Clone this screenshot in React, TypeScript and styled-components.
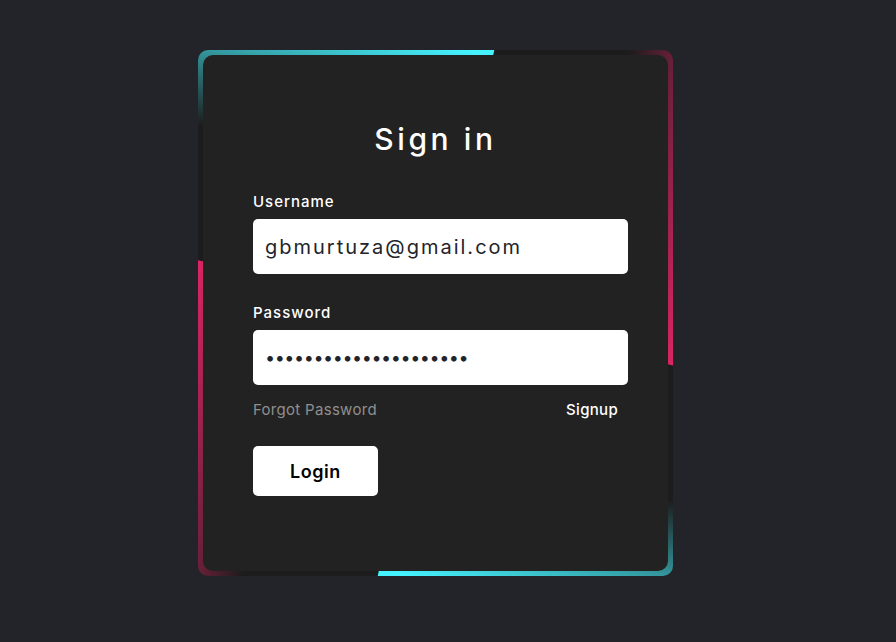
import React from "react";
import styled, { createGlobalStyle } from "styled-components";

const GlobalStyle = createGlobalStyle`
  * { box-sizing: border-box; }
  html, body { margin: 0; padding: 0; }
  body {
    background: #23242a;
    font-family: Inter, "Open Sans", sans-serif;
  }
`;

const Page = styled.main`
  min-height: 642px;
  display: flex;
  justify-content: center;
  align-items: flex-start;
  padding: 50px 25px 0 0;
`;

const Box = styled.div`
  position: relative;
  width: 475px;
  height: 526px;
  padding: 5px;
  display: flex;
  background: #1c1c1c;
  border-radius: 10px;
  overflow: hidden;
`;

const Glow = styled.span<{ $color: string; $angle: number }>`
  position: absolute;
  top: -50%;
  left: -50%;
  width: 100%;
  height: 100%;
  transform-origin: bottom right;
  transform: rotate(${(p) => p.$angle}deg);
  background: linear-gradient(
    0deg,
    transparent,
    transparent,
    ${(p) => p.$color},
    ${(p) => p.$color},
    ${(p) => p.$color}
  );
  pointer-events: none;
`;

const Form = styled.form`
  position: relative;
  z-index: 2;
  flex: 1;
  min-width: 0;
  display: flex;
  flex-direction: column;
  align-items: flex-start;
  background: #222;
  border-radius: 10px;
  padding: 66px 50px 0;
`;

const Title = styled.h2`
  align-self: stretch;
  margin: 0 0 35px;
  color: #fff;
  font-size: 30px;
  line-height: 36px;
  font-weight: 500;
  letter-spacing: 3.6px;
  text-align: center;
`;

const Field = styled.div<{ $spaced?: boolean }>`
  display: flex;
  flex-direction: column;
  gap: 7px;
  margin-top: ${(p) => (p.$spaced ? "29px" : "0")};
`;

const Label = styled.label`
  color: #fff;
  font-size: 15px;
  line-height: 20px;
  font-weight: 500;
  letter-spacing: 1px;
`;

const Input = styled.input<{ $secret?: boolean }>`
  flex: none;
  width: 375px;
  height: 55px;
  border: none;
  outline: none;
  border-radius: 5px;
  background: #fff;
  padding: 0 12px;
  font-family: Inter, "Open Sans", sans-serif;
  font-size: ${(p) => (p.$secret ? "18px" : "20px")};
  color: #23242a;
  letter-spacing: ${(p) => (p.$secret ? "-0.45px" : "2px")};
`;

const LinksRow = styled.div`
  align-self: stretch;
  display: flex;
  justify-content: space-between;
  margin-top: 15px;
  font-size: 15px;
  line-height: 20px;
`;

const LinkText = styled.a<{ $muted?: boolean }>`
  color: ${(p) => (p.$muted ? "#8f8f8f" : "#fff")};
  font-weight: ${(p) => (p.$muted ? 400 : 500)};
  text-decoration: none;
  letter-spacing: 0.02em;
`;

const Button = styled.button`
  margin-top: 26px;
  width: 125px;
  height: 50px;
  border: none;
  border-radius: 5px;
  background: #fff;
  color: #000;
  font-family: Inter, "Open Sans", sans-serif;
  font-size: 18px;
  font-weight: 600;
  letter-spacing: 0.03em;
  cursor: pointer;
`;

export default function App() {
  return (
    <>
      <GlobalStyle />
      <Page>
        <Box>
          <Glow $color="#45f3ff" $angle={12.5} />
          <Glow $color="#45f3ff" $angle={192.5} />
          <Glow $color="#ff2770" $angle={102.5} />
          <Glow $color="#ff2770" $angle={282.5} />
          <Form onSubmit={(e) => e.preventDefault()}>
            <Title>Sign in</Title>
            <Field>
              <Label htmlFor="username">Username</Label>
              <Input id="username" type="text" defaultValue="gbmurtuza@gmail.com" />
            </Field>
            <Field $spaced>
              <Label htmlFor="password">Password</Label>
              <Input id="password" type="password" $secret defaultValue="gbmurtuza@gmail.com12" />
            </Field>
            <LinksRow>
              <LinkText href="#" $muted>Forgot Password</LinkText>
              <LinkText href="#">Signup</LinkText>
            </LinksRow>
            <Button type="submit">Login</Button>
          </Form>
        </Box>
      </Page>
    </>
  );
}
